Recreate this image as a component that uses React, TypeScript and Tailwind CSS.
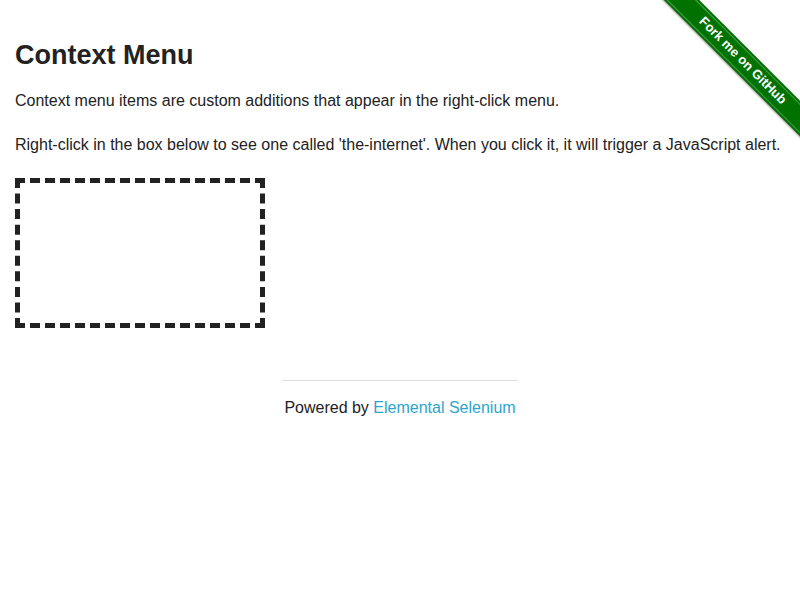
export default function App() {
  return (
    <div className="relative min-h-screen overflow-hidden bg-white font-['Liberation_Sans',Arial,sans-serif] text-[16px] text-[#222]">
      {/* github ribbon */}
      <div className="absolute right-0 top-0 h-[149px] w-[149px] overflow-hidden">
        <a
          href="#"
          className="absolute left-[-30px] top-[47px] flex h-[25px] w-[240px] rotate-45 items-center justify-center bg-[#007200] shadow-[0_1px_2px_rgba(0,0,0,0.4)]"
        >
          <span className="flex h-[21px] w-full items-center justify-center border-y border-[#ffffff50] pb-[1px] pl-[4px] text-[13px] font-bold text-white">
            Fork me on GitHub
          </span>
        </a>
      </div>

      <div className="px-[15px] pt-[36px]">
        <h3 className="text-[27px] font-bold leading-[38px]">Context Menu</h3>
        <p className="mt-[15px] leading-[24px]">
          Context menu items are custom additions that appear in the right-click menu.
        </p>
        <p className="mt-[20px] leading-[24px]">
          Right-click in the box below to see one called 'the-internet'. When you click it, it will
          trigger a JavaScript alert.
        </p>
        <div className="mt-[21px] h-[150px] w-[250px] border-[5px] border-dashed border-[#222]" />
      </div>

      <div className="mx-auto mt-[52px] w-[236px]">
        <hr className="border-t border-[#ddd]" />
        <div className="mt-[15px] text-center leading-[24px]">
          Powered by{" "}
          <a href="#" className="text-[#2ba6cb]">
            Elemental Selenium
          </a>
        </div>
      </div>
    </div>
  );
}
